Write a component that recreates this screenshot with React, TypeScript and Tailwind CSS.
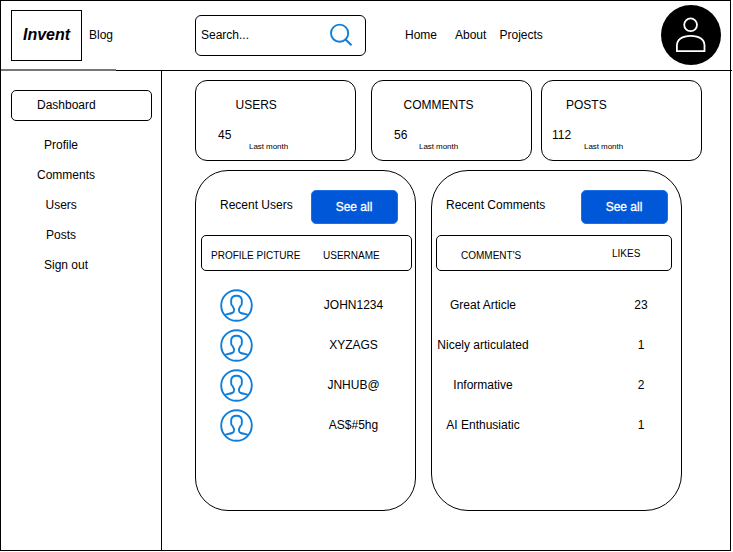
const sidebarLinks = [
  { label: 'Profile', indent: 'pl-[43px]' },
  { label: 'Comments', indent: 'pl-[36px]' },
  { label: 'Users', indent: 'pl-[44.5px]' },
  { label: 'Posts', indent: 'pl-[45px]' },
  { label: 'Sign out', indent: 'pl-[43px]' },
];

const stats = [
  { title: 'USERS', value: '45', card: '', titlePad: 'pl-[39.5px]', valuePad: 'pl-[22px]', notePad: 'pl-[53px]' },
  { title: 'COMMENTS', value: '56', card: 'ml-[15px]', titlePad: 'pl-[31.5px]', valuePad: 'pl-[22px]', notePad: 'pl-[47px]' },
  { title: 'POSTS', value: '112', card: 'ml-[9px]', titlePad: 'pl-[24px]', valuePad: 'pl-[10px]', notePad: 'pl-[42px]' },
];

const users = ['JOHN1234', 'XYZAGS', 'JNHUB@', 'AS$#5hg'];

const comments = [
  { text: 'Great Article', likes: 23 },
  { text: 'Nicely articulated', likes: 1 },
  { text: 'Informative', likes: 2 },
  { text: 'AI Enthusiatic', likes: 1 },
];

function SearchIcon() {
  return (
    <svg className="mr-[13px] mb-px ml-auto h-[22px] w-[22px] overflow-visible" viewBox="0 0 22 22" fill="none" stroke="#0f7fdc" strokeWidth="1.9">
      <circle cx="9.6" cy="9.2" r="8.6" />
      <path d="M15.6 15.4 L21.5 21.3" strokeWidth="2.1" />
    </svg>
  );
}

function AccountAvatar() {
  return (
    <svg className="h-[60px] w-[60px]" viewBox="0 0 60 60" fill="none">
      <circle cx="30" cy="30" r="30" fill="#000" />
      <g stroke="#fff" strokeWidth="1.8" strokeLinejoin="round">
        <circle cx="29.6" cy="19.8" r="6.4" />
        <path d="M15.9 46.2 V40.5 C15.9 34.8 21 30.8 29.8 30.8 C38.6 30.8 43.5 34.8 43.5 40.5 V46.2 Z" />
      </g>
    </svg>
  );
}

function UserIcon() {
  return (
    <svg className="mt-px h-[33px] w-[33px]" viewBox="0 0 33 33" fill="none" stroke="#0f7fdc" strokeWidth="1.9" strokeLinejoin="round">
      <circle cx="16.5" cy="16.5" r="15.3" />
      <path d="M4.8 26.2 C6.8 24.8 9.8 24.9 12.2 24 C13.8 23.4 14 22.9 14 21.8 V20 C14 19.1 12.9 18.5 12.4 16.8 C11.4 16.3 11 15 11.2 13.8 C11.3 13 11.1 12.5 11.1 11.6 C11.2 8.6 13.2 6.7 16.5 6.7 C19.8 6.7 21.8 8.6 21.9 11.6 C21.9 12.5 21.7 13 21.8 13.8 C22 15 21.6 16.3 20.6 16.8 C20.1 18.5 19 19.1 19 20 V21.8 C19 22.9 19.2 23.4 20.8 24 C23.2 24.9 26.2 24.8 28.2 26.2" />
    </svg>
  );
}

function SeeAll() {
  return (
    <button className="mt-[19px] h-[34px] w-[87px] rounded-[5px] border border-[#1d70e8] bg-[#0057d8] pr-px text-[12px] leading-[14px] text-white [-webkit-text-stroke:0.3px_white]">
      See all
    </button>
  );
}

export default function App() {
  return (
    <div className="h-[552px] w-[733px] overflow-hidden bg-white font-['Liberation_Sans',Arial,sans-serif] text-[12px] leading-[14px] whitespace-nowrap text-black">
      <div className="relative flex h-[551px] w-[731px] flex-col border border-black">
        <header className="flex h-[70px] w-[731px] shrink-0 border-b border-black">
          <div className="mt-[9px] ml-[10px] flex h-[51px] w-[71px] items-center justify-center border border-black pb-[2px] text-[16px] leading-[18px] font-bold italic">
            Invent
          </div>
          <a className="mt-[27px] ml-[7px] w-[106px]">Blog</a>
          <div className="mt-[14px] flex h-[41px] w-[171px] items-center rounded-[6px] border border-black pl-[5px]">
            <span className="-mt-px">Search...</span>
            <SearchIcon />
          </div>
          <nav className="mt-[27px] ml-[39px] flex w-[256px]">
            <a className="w-[50px]">Home</a>
            <a className="w-[44.5px]">About</a>
            <a>Projects</a>
          </nav>
          <div className="mt-[4px]">
            <AccountAvatar />
          </div>
        </header>
        <div className="absolute top-[68px] left-0 h-[2px] w-[115px] bg-[#777]" />

        <div className="flex flex-1">
          <aside className="w-[161px] shrink-0 border-r border-black pt-[19px]">
            <div className="ml-[10px] flex h-[31px] w-[141px] items-center rounded-[5px] border border-black pl-[25px]">
              <span className="-mt-px">Dashboard</span>
            </div>
            <ul className="mt-[17px] flex flex-col gap-4">
              {sidebarLinks.map((link) => (
                <li key={link.label} className={link.indent}>{link.label}</li>
              ))}
            </ul>
          </aside>

          <main className="pt-[9px] pl-[33px]">
            <section className="flex">
              {stats.map((s) => (
                <div key={s.title} className={`h-[81px] w-[161px] rounded-[12px] border border-black pt-[17px] ${s.card}`}>
                  <div className={s.titlePad}>{s.title}</div>
                  <div className={`mt-4 ${s.valuePad}`}>{s.value}</div>
                  <div className={`text-[8px] leading-[10px] tracking-[-0.05px] ${s.notePad}`}>Last month</div>
                </div>
              ))}
            </section>

            <section className="mt-[9px] flex gap-[15px]">
              <div className="h-[341px] w-[221px] rounded-[33px] border border-black">
                <div className="flex pl-[24px]">
                  <h2 className="mt-[27px] w-[91px]">Recent Users</h2>
                  <SeeAll />
                </div>
                <div className="mt-[11px] ml-[5px] flex h-[36px] w-[211px] rounded-[5px] border border-black pt-[14px] pl-[9px] text-[10px] leading-[12px]">
                  <span className="w-[112px]">PROFILE PICTURE</span>
                  <span>USERNAME</span>
                </div>
                <ul className="mt-[14px]">
                  {users.map((name) => (
                    <li key={name} className="flex h-[40px] items-center pl-[24px]">
                      <UserIcon />
                      <span className="-mt-px ml-[57.5px] w-[86px] text-center">{name}</span>
                    </li>
                  ))}
                </ul>
              </div>

              <div className="h-[341px] w-[251px] rounded-[37px] border border-black">
                <div className="flex pl-[14px]">
                  <h2 className="mt-[27px] w-[135px]">Recent Comments</h2>
                  <SeeAll />
                </div>
                <div className="mt-[11px] ml-[4px] flex h-[36px] w-[236px] rounded-[5px] border border-black pt-[14px] pl-[24px] text-[10px] leading-[12px]">
                  <span className="w-[151px]">COMMENT&apos;S</span>
                  <span className="-mt-[2px]">LIKES</span>
                </div>
                <ul className="mt-[14px]">
                  {comments.map((c, i) => (
                    <li key={i} className="flex h-[40px] items-center">
                      <span className="-mt-px w-[102px] text-center">{c.text}</span>
                      <span className="-mt-px ml-[87px] w-[40px] text-center">{c.likes}</span>
                    </li>
                  ))}
                </ul>
              </div>
            </section>
          </main>
        </div>
      </div>
    </div>
  );
}
